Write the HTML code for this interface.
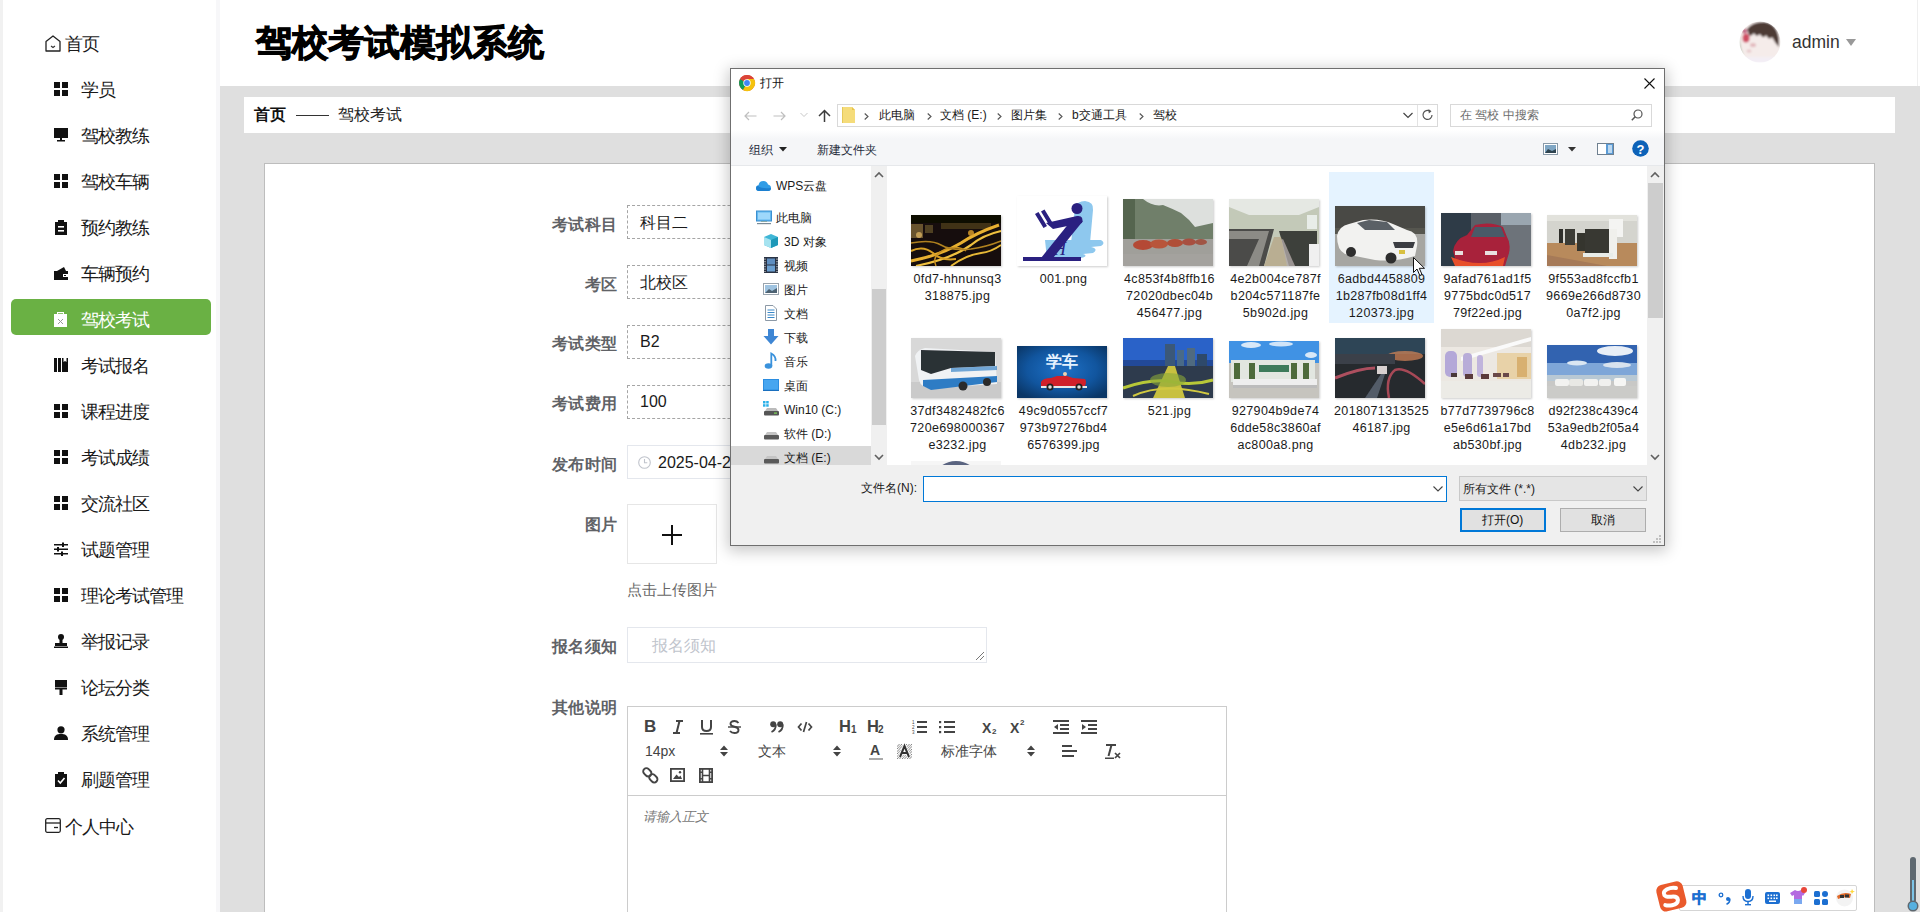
<!DOCTYPE html>
<html><head><meta charset="utf-8">
<style>
*{box-sizing:border-box;margin:0;padding:0}
html,body{width:1920px;height:912px;overflow:hidden;background:#fff;font-family:"Liberation Sans",sans-serif;color:#222}
.a{position:absolute}
.t{position:absolute;white-space:nowrap}
svg{position:absolute;overflow:visible}
</style></head><body>

<div class="a" style="left:0;top:0;width:220px;height:912px;background:#fff"></div>
<div class="a" style="left:0;top:0;width:3px;height:912px;background:#f1f1f1"></div>
<div class="a" style="left:216px;top:0;width:4px;height:912px;background:#f7f7f9"></div>
<div class="a" style="left:11px;top:299px;width:200px;height:36px;background:#6ab144;border-radius:5px"></div>
<svg style="left:45px;top:35px" width="16" height="17"><path d="M1 6.5 L8 1 L15 6.5 V16 H1Z" fill="none" stroke="#222" stroke-width="1.3" stroke-linejoin="round"/><path d="M6 11 L8 12.5 L10 11" fill="none" stroke="#333" stroke-width="1.1"/></svg>
<div class="t" style="left:65px;top:36px;font-size:17.5px;line-height:1;letter-spacing:-1px;color:#1a1a1a">首页</div>
<svg style="left:54px;top:82px" width="14" height="14"><rect x="0" y="0" width="6" height="6" fill="#111"/><rect x="8" y="0" width="6" height="6" fill="#111"/><rect x="0" y="8" width="6" height="6" fill="#111"/><rect x="8" y="8" width="6" height="6" fill="#111"/></svg>
<div class="t" style="left:81px;top:82px;font-size:17.5px;line-height:1;letter-spacing:-1px;color:#1a1a1a">学员</div>
<svg style="left:54px;top:128px" width="14" height="14"><rect x="0" y="0" width="14" height="10" fill="#111"/><rect x="6" y="10" width="2" height="2" fill="#111"/><rect x="3" y="12" width="8" height="1.5" fill="#111"/></svg>
<div class="t" style="left:81px;top:128px;font-size:17.5px;line-height:1;letter-spacing:-1px;color:#1a1a1a">驾校教练</div>
<svg style="left:54px;top:174px" width="14" height="14"><rect x="0" y="0" width="6" height="6" fill="#111"/><rect x="8" y="0" width="6" height="6" fill="#111"/><rect x="0" y="8" width="6" height="6" fill="#111"/><rect x="8" y="8" width="6" height="6" fill="#111"/></svg>
<div class="t" style="left:81px;top:174px;font-size:17.5px;line-height:1;letter-spacing:-1px;color:#1a1a1a">驾校车辆</div>
<svg style="left:55px;top:220px" width="13" height="15"><rect x="0" y="2" width="12" height="13" fill="#111"/><rect x="3" y="0" width="6" height="3" fill="#111"/><rect x="3" y="6" width="6" height="1.6" fill="#fff"/><rect x="3" y="10" width="6" height="1.6" fill="#fff"/></svg>
<div class="t" style="left:81px;top:220px;font-size:17.5px;line-height:1;letter-spacing:-1px;color:#1a1a1a">预约教练</div>
<svg style="left:54px;top:266px" width="14" height="14"><rect x="0" y="5" width="14" height="9" fill="#111"/><path d="M3 5 L10 1 L12 5Z" fill="#111"/><rect x="9" y="8" width="5" height="3" fill="#fff"/><rect x="10" y="9" width="2" height="1" fill="#111"/></svg>
<div class="t" style="left:81px;top:266px;font-size:17.5px;line-height:1;letter-spacing:-1px;color:#1a1a1a">车辆预约</div>
<svg style="left:54px;top:312px" width="14" height="15"><rect x="0" y="2" width="13" height="13" fill="#fff"/><rect x="3" y="0" width="7" height="3" fill="#fff"/><rect x="4" y="1" width="5" height="1" fill="#8fc470"/><path d="M4 7 L9 12 M9 7 L4 12" stroke="#999" stroke-width="1"/></svg>
<div class="t" style="left:81px;top:312px;font-size:17.5px;line-height:1;letter-spacing:-1px;color:#fff">驾校考试</div>
<svg style="left:54px;top:358px" width="14" height="14"><rect x="0" y="0" width="3" height="14" fill="#111"/><rect x="4" y="0" width="3" height="14" fill="#111"/><path d="M8 0 H14 V14 H8Z" fill="#111"/><path d="M9.5 0 V4 L11 3 L12.5 4 V0Z" fill="#fff"/></svg>
<div class="t" style="left:81px;top:358px;font-size:17.5px;line-height:1;letter-spacing:-1px;color:#1a1a1a">考试报名</div>
<svg style="left:54px;top:404px" width="14" height="14"><rect x="0" y="0" width="6" height="6" fill="#111"/><rect x="8" y="0" width="6" height="6" fill="#111"/><rect x="0" y="8" width="6" height="6" fill="#111"/><rect x="8" y="8" width="6" height="6" fill="#111"/></svg>
<div class="t" style="left:81px;top:404px;font-size:17.5px;line-height:1;letter-spacing:-1px;color:#1a1a1a">课程进度</div>
<svg style="left:54px;top:450px" width="14" height="14"><rect x="0" y="0" width="6" height="6" fill="#111"/><rect x="8" y="0" width="6" height="6" fill="#111"/><rect x="0" y="8" width="6" height="6" fill="#111"/><rect x="8" y="8" width="6" height="6" fill="#111"/></svg>
<div class="t" style="left:81px;top:450px;font-size:17.5px;line-height:1;letter-spacing:-1px;color:#1a1a1a">考试成绩</div>
<svg style="left:54px;top:496px" width="14" height="14"><rect x="0" y="0" width="6" height="6" fill="#111"/><rect x="8" y="0" width="6" height="6" fill="#111"/><rect x="0" y="8" width="6" height="6" fill="#111"/><rect x="8" y="8" width="6" height="6" fill="#111"/></svg>
<div class="t" style="left:81px;top:496px;font-size:17.5px;line-height:1;letter-spacing:-1px;color:#1a1a1a">交流社区</div>
<svg style="left:54px;top:542px" width="14" height="14"><rect x="0" y="2" width="14" height="1.5" fill="#111"/><rect x="0" y="6.5" width="14" height="1.5" fill="#111"/><rect x="0" y="11" width="14" height="1.5" fill="#111"/><rect x="8" y="0.5" width="2" height="4.5" fill="#111"/><rect x="3" y="5" width="2" height="4.5" fill="#111"/><rect x="7" y="9.5" width="2" height="4.5" fill="#111"/></svg>
<div class="t" style="left:81px;top:542px;font-size:17.5px;line-height:1;letter-spacing:-1px;color:#1a1a1a">试题管理</div>
<svg style="left:54px;top:588px" width="14" height="14"><rect x="0" y="0" width="6" height="6" fill="#111"/><rect x="8" y="0" width="6" height="6" fill="#111"/><rect x="0" y="8" width="6" height="6" fill="#111"/><rect x="8" y="8" width="6" height="6" fill="#111"/></svg>
<div class="t" style="left:81px;top:588px;font-size:17.5px;line-height:1;letter-spacing:-1px;color:#1a1a1a">理论考试管理</div>
<svg style="left:54px;top:634px" width="14" height="14"><circle cx="7" cy="3" r="3" fill="#111"/><rect x="5.5" y="5" width="3" height="4" fill="#111"/><rect x="1" y="9" width="12" height="3" fill="#111"/><rect x="0" y="12.5" width="14" height="1.5" fill="#111"/></svg>
<div class="t" style="left:81px;top:634px;font-size:17.5px;line-height:1;letter-spacing:-1px;color:#1a1a1a">举报记录</div>
<svg style="left:55px;top:680px" width="12" height="15"><rect x="0" y="0" width="12" height="7" fill="#111"/><rect x="0" y="7.5" width="12" height="2" fill="#111"/><rect x="4.5" y="9" width="3" height="6" fill="#111"/></svg>
<div class="t" style="left:81px;top:680px;font-size:17.5px;line-height:1;letter-spacing:-1px;color:#1a1a1a">论坛分类</div>
<svg style="left:54px;top:726px" width="14" height="14"><circle cx="7" cy="3.8" r="3.6" fill="#111"/><path d="M0 14 C0 9 3 8 7 8 C11 8 14 9 14 14Z" fill="#111"/></svg>
<div class="t" style="left:81px;top:726px;font-size:17.5px;line-height:1;letter-spacing:-1px;color:#1a1a1a">系统管理</div>
<svg style="left:55px;top:772px" width="13" height="15"><rect x="0" y="2" width="12" height="13" fill="#111"/><rect x="3" y="0" width="6" height="3" fill="#111"/><path d="M3 8.5 L5.3 11 L9.5 6" stroke="#fff" stroke-width="1.6" fill="none"/></svg>
<div class="t" style="left:81px;top:772px;font-size:17.5px;line-height:1;letter-spacing:-1px;color:#1a1a1a">刷题管理</div>
<svg style="left:45px;top:818px" width="16" height="15"><rect x="0.7" y="0.7" width="14.6" height="13.6" rx="1.5" fill="none" stroke="#222" stroke-width="1.3"/><path d="M1 5 H15" stroke="#222" stroke-width="1.3"/><path d="M9 9.5 H13" stroke="#222" stroke-width="1.3"/></svg>
<div class="t" style="left:65px;top:819px;font-size:17.5px;line-height:1;letter-spacing:-1px;color:#1a1a1a">个人中心</div>
<div class="a" style="left:220px;top:0;width:1700px;height:86px;background:#fff"></div><div class="a" style="left:1917px;top:0;width:1px;height:86px;background:#efefef"></div>
<div class="a" style="left:220px;top:86px;width:1700px;height:826px;background:#dfdfdf"></div>
<div class="a" style="left:244px;top:97px;width:1651px;height:36px;background:#fff"></div>
<div class="a" style="left:264px;top:163px;width:1611px;height:760px;background:#fff;border:1px solid #bdbdbd"></div>
<div class="t" style="left:256px;top:25px;font-size:36px;font-weight:bold;line-height:1;color:#000;-webkit-text-stroke:1px #000">驾校考试模拟系统</div>
<!-- avatar -->
<svg style="left:1739px;top:21px" width="42" height="42"><defs><clipPath id="av"><circle cx="21" cy="21" r="20.5"/></clipPath><filter id="bl"><feGaussianBlur stdDeviation="0.8"/></filter></defs>
<g clip-path="url(#av)" filter="url(#bl)"><rect width="42" height="42" fill="#f5ecea"/>
<path d="M0 8 Q0 30 8 42 H0Z" fill="#9fb09a" opacity=".8"/>
<path d="M8 8 Q14 0 26 1 Q38 3 40 18 L40 26 Q36 22 33 16 Q30 20 27 14 Q24 19 21 13 Q17 17 15 12 Q12 16 10 14Z" fill="#4e3a36"/>
<ellipse cx="7" cy="17" rx="3.5" ry="4.5" fill="#cf4d64"/><ellipse cx="5.5" cy="10" rx="2.8" ry="2.5" fill="#c26a86"/>
<ellipse cx="14" cy="24" rx="3" ry="2" fill="#e3b9bd"/><ellipse cx="10" cy="30" rx="2.5" ry="1.5" fill="#e5c5c8"/>
<rect x="0" y="36" width="42" height="6" fill="#f3eef5"/></g></svg>
<div class="t" style="left:1792px;top:33.5px;font-size:17.5px;line-height:1;color:#333">admin</div>
<svg style="left:1846px;top:39px" width="11" height="8"><path d="M0 0 H10 L5 7Z" fill="#999"/></svg>
<!-- breadcrumb -->
<div class="t" style="left:254px;top:107px;font-size:16px;line-height:1;font-weight:bold;color:#111">首页</div>
<div class="a" style="left:296px;top:115px;width:33px;height:1px;background:#333"></div>
<div class="t" style="left:338px;top:107px;font-size:16px;line-height:1;color:#222">驾校考试</div>
<!-- FORM -->
<div class="t" style="right:1302px;top:217px;font-size:16px;line-height:1;font-weight:bold;color:#606266;letter-spacing:0.6px">考试科目</div>
<div class="a" style="left:627px;top:205px;width:420px;height:34px;border:1px dashed #a5a5a5"></div>
<div class="t" style="left:640px;top:215px;font-size:16px;line-height:1;color:#1a1a1a">科目二</div>

<div class="t" style="right:1302px;top:277px;font-size:16px;line-height:1;font-weight:bold;color:#606266;letter-spacing:0.6px">考区</div>
<div class="a" style="left:627px;top:265px;width:420px;height:34px;border:1px dashed #a5a5a5"></div>
<div class="t" style="left:640px;top:275px;font-size:16px;line-height:1;color:#1a1a1a">北校区</div>

<div class="t" style="right:1302px;top:336px;font-size:16px;line-height:1;font-weight:bold;color:#606266;letter-spacing:0.6px">考试类型</div>
<div class="a" style="left:627px;top:325px;width:420px;height:34px;border:1px dashed #a5a5a5"></div>
<div class="t" style="left:640px;top:334px;font-size:16px;line-height:1;color:#1a1a1a">B2</div>

<div class="t" style="right:1302px;top:396px;font-size:16px;line-height:1;font-weight:bold;color:#606266;letter-spacing:0.6px">考试费用</div>
<div class="a" style="left:627px;top:385px;width:420px;height:34px;border:1px dashed #a5a5a5"></div>
<div class="t" style="left:640px;top:394px;font-size:16px;line-height:1;color:#1a1a1a">100</div>

<div class="t" style="right:1302px;top:457px;font-size:16px;line-height:1;font-weight:bold;color:#606266;letter-spacing:0.6px">发布时间</div>
<div class="a" style="left:627px;top:445px;width:420px;height:34px;border:1px solid #e4e7ed"></div>
<svg style="left:638px;top:456px" width="13" height="13"><circle cx="6.5" cy="6.5" r="5.8" fill="none" stroke="#c0c4cc" stroke-width="1.1"/><path d="M6.5 3 V6.8 H9.3" fill="none" stroke="#c0c4cc" stroke-width="1.1"/></svg>
<div class="t" style="left:658px;top:455px;font-size:16px;line-height:1;color:#1a1a1a">2025-04-27 10:00:00</div>

<div class="t" style="right:1302px;top:517px;font-size:16px;line-height:1;font-weight:bold;color:#606266;letter-spacing:0.6px">图片</div>
<div class="a" style="left:627px;top:504px;width:90px;height:60px;border:1px solid #e6e6e6"></div>
<div class="a" style="left:662px;top:534px;width:20px;height:2px;background:#111"></div>
<div class="a" style="left:671px;top:525px;width:2px;height:20px;background:#111"></div>
<div class="t" style="left:627px;top:583px;font-size:14.5px;line-height:1;color:#666">点击上传图片</div>

<div class="t" style="right:1302px;top:639px;font-size:16px;line-height:1;font-weight:bold;color:#606266;letter-spacing:0.6px">报名须知</div>
<div class="a" style="left:627px;top:627px;width:360px;height:36px;border:1px solid #e4e7ed"></div>
<div class="t" style="left:652px;top:638px;font-size:16px;line-height:1;color:#c0c4cc">报名须知</div>
<svg style="left:974px;top:650px" width="12" height="12"><path d="M2 10 L10 2 M6 10 L10 6" stroke="#777" stroke-width="1"/></svg>

<div class="t" style="right:1302px;top:700px;font-size:16px;line-height:1;font-weight:bold;color:#606266;letter-spacing:0.6px">其他说明</div>
<div class="a" style="left:627px;top:706px;width:600px;height:220px;border:1px solid #ccc;background:#fff"></div>
<div class="a" style="left:628px;top:795px;width:598px;height:1px;background:#ccc"></div>
<div class="t" style="left:644px;top:718px;font-size:17px;line-height:1;color:#444;font-weight:bold">B</div>
<svg style="left:672px;top:720px" width="12" height="14"><path d="M4 1 H11 M1 13 H8 M7.5 1 L4.5 13" stroke="#444" stroke-width="2" fill="none"/></svg>
<svg style="left:700px;top:719px" width="13" height="16"><path d="M2 1 V8 Q2 12 6.5 12 Q11 12 11 8 V1" stroke="#444" stroke-width="2" fill="none"/><rect x="0" y="14" width="13" height="1.6" fill="#444"/></svg>
<svg style="left:728px;top:720px" width="13" height="14"><path d="M10.5 3 Q9 1 6.5 1 Q2.5 1 2.5 3.8 Q2.5 6 6.5 6.8 Q10.5 7.6 10.5 10 Q10.5 13 6.5 13 Q3.5 13 2 11" stroke="#444" stroke-width="1.9" fill="none"/><rect x="0" y="6.3" width="13" height="1.4" fill="#444"/></svg>
<svg style="left:770px;top:721px" width="14" height="12"><circle cx="3.2" cy="3.2" r="3" fill="#444"/><path d="M5.8 3.5 Q6 9 1.5 11" stroke="#444" stroke-width="1.8" fill="none"/><circle cx="10.2" cy="3.2" r="3" fill="#444"/><path d="M12.8 3.5 Q13 9 8.5 11" stroke="#444" stroke-width="1.8" fill="none"/></svg>
<svg style="left:797px;top:721px" width="16" height="12"><path d="M4.5 2.5 L1.5 6 L4.5 9.5 M11.5 2.5 L14.5 6 L11.5 9.5 M9.5 1 L6.5 11" stroke="#444" stroke-width="1.7" fill="none"/></svg>
<div class="t" style="left:839px;top:718px;font-size:16.5px;line-height:1;color:#444;font-weight:bold">H</div><div class="t" style="left:851px;top:725px;font-size:10px;line-height:1;color:#444;font-weight:bold">1</div>
<div class="t" style="left:867px;top:718px;font-size:16.5px;line-height:1;color:#444;font-weight:bold">H</div><div class="t" style="left:878px;top:725px;font-size:10px;line-height:1;color:#444;font-weight:bold">2</div>
<svg style="left:912px;top:720px" width="15" height="14"><path d="M5 2 H15 M5 7 H15 M5 12 H15" stroke="#444" stroke-width="1.8"/><text x="0" y="4" font-size="4.5" fill="#444" font-family="Liberation Sans">1</text><text x="0" y="9" font-size="4.5" fill="#444" font-family="Liberation Sans">2</text><text x="0" y="14" font-size="4.5" fill="#444" font-family="Liberation Sans">3</text></svg>
<svg style="left:939px;top:720px" width="16" height="14"><path d="M5 2 H16 M5 7 H16 M5 12 H16" stroke="#444" stroke-width="1.8"/><rect x="0" y="1" width="2.2" height="2.2" fill="#444"/><rect x="0" y="6" width="2.2" height="2.2" fill="#444"/><rect x="0" y="11" width="2.2" height="2.2" fill="#444"/></svg>
<div class="t" style="left:982px;top:721px;font-size:14px;line-height:1;color:#444;font-weight:bold">X</div><div class="t" style="left:992px;top:728px;font-size:8px;line-height:1;color:#444;font-weight:bold">2</div>
<div class="t" style="left:1010px;top:721px;font-size:14px;line-height:1;color:#444;font-weight:bold">X</div><div class="t" style="left:1020px;top:719px;font-size:8px;line-height:1;color:#444;font-weight:bold">2</div>
<svg style="left:1053px;top:720px" width="16" height="14"><path d="M0 1 H16 M0 13 H16 M7 5 H16 M7 9 H16" stroke="#444" stroke-width="1.8"/><path d="M5 4 L1 7 L5 10Z" fill="#444"/></svg>
<svg style="left:1081px;top:720px" width="16" height="14"><path d="M0 1 H16 M0 13 H16 M7 5 H16 M7 9 H16" stroke="#444" stroke-width="1.8"/><path d="M1 4 L5 7 L1 10Z" fill="#444"/></svg>
<div class="t" style="left:645px;top:744px;font-size:14px;line-height:1;color:#444;color:#444">14px</div>
<svg style="left:720px;top:745px" width="8" height="12"><path d="M0 5 L4 0.5 L8 5Z M0 7 L4 11.5 L8 7Z" fill="#444"/></svg>
<div class="t" style="left:758px;top:744px;font-size:14px;line-height:1;color:#444;">文本</div>
<svg style="left:833px;top:745px" width="8" height="12"><path d="M0 5 L4 0.5 L8 5Z M0 7 L4 11.5 L8 7Z" fill="#444"/></svg>
<div class="t" style="left:870px;top:743px;font-size:14px;line-height:1;color:#444;font-weight:bold">A</div>
<div class="a" style="left:869px;top:758px;width:14px;height:2px;background:#aaa"></div>
<svg style="left:897px;top:744px" width="15" height="15"><defs><pattern id="h" width="2.5" height="2.5" patternUnits="userSpaceOnUse"><path d="M0 2.5 L2.5 0" stroke="#666" stroke-width="0.8"/></pattern></defs><rect x="0" y="0" width="15" height="15" fill="url(#h)"/><path d="M3 13 L7.5 2 L12 13 M4.8 9 H10.2" stroke="#fff" stroke-width="3.6" fill="none"/><path d="M3 13 L7.5 2 L12 13 M4.8 9 H10.2" stroke="#333" stroke-width="2" fill="none"/></svg>
<div class="t" style="left:941px;top:744px;font-size:14px;line-height:1;color:#444;">标准字体</div>
<svg style="left:1027px;top:745px" width="8" height="12"><path d="M0 5 L4 0.5 L8 5Z M0 7 L4 11.5 L8 7Z" fill="#444"/></svg>
<svg style="left:1062px;top:745px" width="15" height="12"><path d="M0 1 H10 M0 6 H15 M0 11 H12" stroke="#444" stroke-width="1.8"/></svg>
<svg style="left:1105px;top:743px" width="16" height="17"><path d="M1 2 H11 M6.5 2 L3.5 13" stroke="#444" stroke-width="2" fill="none"/><rect x="0" y="14.5" width="9" height="1.5" fill="#444"/><path d="M10 10 L15 15 M15 10 L10 15" stroke="#444" stroke-width="1.7"/></svg>
<svg style="left:643px;top:768px" width="15" height="15"><g transform="rotate(-45 7.5 7.5)"><rect x="4.3" y="-1.5" width="6.4" height="9" rx="3.2" fill="none" stroke="#444" stroke-width="1.9"/><rect x="4.3" y="7" width="6.4" height="9" rx="3.2" fill="none" stroke="#444" stroke-width="1.9"/></g></svg>
<svg style="left:670px;top:768px" width="15" height="14"><rect x="0.9" y="0.9" width="13.2" height="12.2" fill="none" stroke="#444" stroke-width="1.8"/><path d="M3 11 L6.5 6.5 L9 9 L10.5 7.5 L12 11Z" fill="#444"/><circle cx="10" cy="4.2" r="1.2" fill="#444"/></svg>
<svg style="left:699px;top:768px" width="14" height="15"><rect x="0.9" y="0.9" width="12.2" height="13.2" fill="none" stroke="#444" stroke-width="1.8"/><path d="M3.5 1 V14 M10.5 1 V14 M3.5 7.5 H10.5 M0 4.3 H3.5 M0 10.7 H3.5 M10.5 4.3 H14 M10.5 10.7 H14" stroke="#444" stroke-width="1.6"/></svg>
<div class="t" style="left:643px;top:810px;font-size:13px;line-height:1;color:#777;font-style:italic">请输入正文</div>

<div class="a" style="left:730px;top:68px;width:935px;height:478px;background:#fff;border:1px solid #6f6f6f;box-shadow:0 3px 14px 2px rgba(0,0,0,0.22)"></div>
<svg style="left:739px;top:75px" width="16" height="16"><circle cx="8" cy="8" r="8" fill="#db4437"/><path d="M8 8 L1.07 4 A8 8 0 0 0 4 14.93Z" fill="#0f9d58"/><path d="M8 8 L4 14.93 A8 8 0 0 0 14.93 4 L8 4Z" fill="#f4c20d"/><path d="M8 8 L1.07 4 A8 8 0 0 1 14.93 4 L8 4Z" fill="#db4437"/><circle cx="8" cy="8" r="3.7" fill="#fff"/><circle cx="8" cy="8" r="2.9" fill="#4285f4"/></svg>
<div class="t" style="left:760px;top:77px;font-size:12px;line-height:1;color:#111;">打开</div>
<svg style="left:1644px;top:78px" width="11" height="11"><path d="M0.5 0.5 L10.5 10.5 M10.5 0.5 L0.5 10.5" stroke="#111" stroke-width="1.1"/></svg>
<svg style="left:744px;top:111px" width="13" height="10"><path d="M12.5 5 H1 M5 1 L1 5 L5 9" stroke="#bfbfbf" stroke-width="1.2" fill="none"/></svg>
<svg style="left:773px;top:111px" width="13" height="10"><path d="M0.5 5 H12 M8 1 L12 5 L8 9" stroke="#bfbfbf" stroke-width="1.2" fill="none"/></svg>
<svg style="left:800px;top:112px" width="8" height="6"><path d="M0.5 1 L4 4.5 L7.5 1" stroke="#c8c8c8" stroke-width="1" fill="none"/></svg>
<svg style="left:818px;top:109px" width="13" height="13"><path d="M6.5 13 V1.5 M1 7 L6.5 1.5 L12 7" stroke="#3c3c3c" stroke-width="1.5" fill="none"/></svg>
<div class="a" style="left:837px;top:104px;width:601px;height:23px;border:1px solid #d9d9d9;background:#fff"></div>
<div class="a" style="left:1417px;top:105px;width:1px;height:21px;background:#e3e3e3"></div>
<svg style="left:842px;top:107px" width="14" height="16"><path d="M0 0 H10 L13 3 V16 H0Z" fill="#f5dc7a"/><path d="M10 0 V3 H13" fill="#e8c44a"/><rect x="0" y="0" width="1" height="16" fill="#e5c95a"/></svg>
<svg style="left:864px;top:113px" width="5" height="7"><path d="M0.7 0.5 L4 3.5 L0.7 6.5" stroke="#555" stroke-width="1.1" fill="none"/></svg>
<div class="t" style="left:879px;top:109px;font-size:12px;line-height:1;color:#1a1a1a;">此电脑</div>
<svg style="left:927px;top:113px" width="5" height="7"><path d="M0.7 0.5 L4 3.5 L0.7 6.5" stroke="#555" stroke-width="1.1" fill="none"/></svg>
<div class="t" style="left:940px;top:109px;font-size:12px;line-height:1;color:#1a1a1a;">文档 (E:)</div>
<svg style="left:997px;top:113px" width="5" height="7"><path d="M0.7 0.5 L4 3.5 L0.7 6.5" stroke="#555" stroke-width="1.1" fill="none"/></svg>
<div class="t" style="left:1011px;top:109px;font-size:12px;line-height:1;color:#1a1a1a;">图片集</div>
<svg style="left:1058px;top:113px" width="5" height="7"><path d="M0.7 0.5 L4 3.5 L0.7 6.5" stroke="#555" stroke-width="1.1" fill="none"/></svg>
<div class="t" style="left:1072px;top:109px;font-size:12px;line-height:1;color:#1a1a1a;">b交通工具</div>
<svg style="left:1139px;top:113px" width="5" height="7"><path d="M0.7 0.5 L4 3.5 L0.7 6.5" stroke="#555" stroke-width="1.1" fill="none"/></svg>
<div class="t" style="left:1153px;top:109px;font-size:12px;line-height:1;color:#1a1a1a;">驾校</div>
<svg style="left:1403px;top:112px" width="10" height="7"><path d="M0.5 1 L5 5.5 L9.5 1" stroke="#444" stroke-width="1.2" fill="none"/></svg>
<svg style="left:1422px;top:109px" width="12" height="12"><path d="M10 6 A4.5 4.5 0 1 1 8 2.2" stroke="#555" stroke-width="1.2" fill="none"/><path d="M6.5 0 L9.5 2.2 L6.8 4.5Z" fill="#555"/></svg>
<div class="a" style="left:1450px;top:104px;width:202px;height:23px;border:1px solid #d9d9d9;background:#fff"></div>
<div class="t" style="left:1460px;top:109px;font-size:12px;line-height:1;color:#6d6d6d;">在 驾校 中搜索</div>
<svg style="left:1631px;top:109px" width="12" height="12"><circle cx="7" cy="5" r="4" stroke="#555" stroke-width="1.2" fill="none"/><path d="M4.2 7.8 L0.8 11.2" stroke="#555" stroke-width="1.5"/></svg>
<div class="a" style="left:731px;top:130px;width:933px;height:36px;background:linear-gradient(#fff 0,#f5f6f8 9px,#f5f6f8 100%);border-bottom:1px solid #e6e8eb"></div>
<div class="t" style="left:749px;top:144px;font-size:12px;line-height:1;color:#1e2b3a;">组织</div>
<svg style="left:779px;top:147px" width="8" height="5"><path d="M0 0 H8 L4 4.5Z" fill="#222"/></svg>
<div class="t" style="left:817px;top:144px;font-size:12px;line-height:1;color:#1e2b3a;">新建文件夹</div>
<svg style="left:1543px;top:143px" width="15" height="12"><rect x="0.5" y="0.5" width="14" height="11" fill="#fff" stroke="#8a9aa8"/><rect x="2" y="2" width="11" height="8" fill="#7fa6c4"/><path d="M2 10 L5 6 L9 8 L13 6 V10Z" fill="#2e4450"/></svg>
<svg style="left:1568px;top:147px" width="8" height="5"><path d="M0 0 H8 L4 4.5Z" fill="#333"/></svg>
<svg style="left:1597px;top:143px" width="17" height="12"><rect x="0.5" y="0.5" width="16" height="11" fill="#fff" stroke="#6f8090"/><rect x="9" y="1" width="7" height="10" fill="#5b9bd5"/><rect x="11" y="2" width="4" height="8" fill="#bcd8f0"/></svg>
<svg style="left:1632px;top:140px" width="17" height="17"><circle cx="8.5" cy="8.5" r="8.3" fill="#0d62b8"/><text x="8.5" y="13.5" text-anchor="middle" font-size="13" font-weight="bold" fill="#fff" font-family="Liberation Sans">?</text></svg>
<div class="a" style="left:871px;top:166px;width:16px;height:299px;background:#f0f0f0"></div>
<div class="a" style="left:872px;top:289px;width:14px;height:136px;background:#cdcdcd"></div>
<svg style="left:874px;top:172px" width="10" height="6"><path d="M1 5 L5 1 L9 5" stroke="#606060" stroke-width="1.6" fill="none"/></svg>
<svg style="left:874px;top:454px" width="10" height="6"><path d="M1 1 L5 5 L9 1" stroke="#606060" stroke-width="1.6" fill="none"/></svg>
<div class="a" style="left:731px;top:446px;width:140px;height:19px;background:#d9d9d9"></div>
<svg style="left:756px;top:177px" width="15" height="16"><path d="M3 14 Q0 14 0 11 Q0 8.5 2.5 8.3 Q3 4 7.5 4 Q11 4 12 7.5 Q15 8 15 11 Q15 14 12 14Z" fill="#2f9ce6"/><path d="M3 14 Q0 14 0 11 Q0 9 2 8.5 Q4 12 15 11 Q15 14 12 14Z" fill="#1b7fd0"/></svg>
<div class="t" style="left:776px;top:180px;font-size:12px;line-height:1;color:#1a1a1a;">WPS云盘</div>
<svg style="left:756px;top:209px" width="16" height="16"><rect x="0.5" y="2" width="15" height="10" fill="#62b8ef" stroke="#3b8fd0" stroke-width="1"/><rect x="2" y="3.5" width="12" height="7" fill="#9ed8fb"/><rect x="5" y="12" width="6" height="1" fill="#8aa"/><rect x="1" y="14" width="14" height="1.2" fill="#7a8a96"/></svg>
<div class="t" style="left:776px;top:212px;font-size:12px;line-height:1;color:#1a1a1a;">此电脑</div>
<svg style="left:763px;top:233px" width="16" height="16"><path d="M8 1 L15 4 V12 L8 15 L1 12 V4Z" fill="#3fb6d6"/><path d="M1 4 L8 7 V15 L1 12Z" fill="#a6e3f0"/><path d="M8 7 L15 4 V12 L8 15Z" fill="#1d98b8"/></svg>
<div class="t" style="left:784px;top:236px;font-size:12px;line-height:1;color:#1a1a1a;">3D 对象</div>
<svg style="left:763px;top:257px" width="16" height="16"><rect x="1" y="0" width="14" height="16" fill="#2a3344"/><rect x="4" y="1.5" width="8" height="6" fill="#5f8ec0"/><rect x="4" y="8.5" width="8" height="6" fill="#6b9fd0"/><path d="M2 1.5 V15 M14 1.5 V15" stroke="#c9c9c9" stroke-width="1.2" stroke-dasharray="1.2 1.3"/></svg>
<div class="t" style="left:784px;top:260px;font-size:12px;line-height:1;color:#1a1a1a;">视频</div>
<svg style="left:763px;top:281px" width="16" height="16"><rect x="0.5" y="2.5" width="15" height="11" fill="#fff" stroke="#9aa4ad"/><rect x="2" y="4" width="12" height="8" fill="#9fc3e0"/><path d="M2 12 L6 8 L9 10 L14 7 V12Z" fill="#4d6272"/></svg>
<div class="t" style="left:784px;top:284px;font-size:12px;line-height:1;color:#1a1a1a;">图片</div>
<svg style="left:763px;top:305px" width="16" height="16"><path d="M2.5 0.5 H10 L13.5 4 V15.5 H2.5Z" fill="#fff" stroke="#8c99a6"/><path d="M4.5 5 H11.5 M4.5 7.5 H11.5 M4.5 10 H11.5 M4.5 12.5 H11.5" stroke="#3a88c8" stroke-width="1"/></svg>
<div class="t" style="left:784px;top:308px;font-size:12px;line-height:1;color:#1a1a1a;">文档</div>
<svg style="left:763px;top:329px" width="16" height="16"><path d="M5 0 H11 V7 H15.5 L8 15.5 L0.5 7 H5Z" fill="#3e86d4"/></svg>
<div class="t" style="left:784px;top:332px;font-size:12px;line-height:1;color:#1a1a1a;">下载</div>
<svg style="left:763px;top:353px" width="16" height="16"><ellipse cx="5.5" cy="13" rx="3.8" ry="2.8" fill="#3a92dc"/><path d="M8.3 13 V0.5 Q13 3 12.5 8" stroke="#3a92dc" stroke-width="1.8" fill="none"/></svg>
<div class="t" style="left:784px;top:356px;font-size:12px;line-height:1;color:#1a1a1a;">音乐</div>
<svg style="left:763px;top:377px" width="16" height="16"><rect x="0" y="2" width="16" height="12" fill="#2b8de0"/><rect x="1" y="3" width="14" height="9.5" fill="#47a6f0"/><rect x="0" y="13" width="16" height="1" fill="#1a6fbe"/></svg>
<div class="t" style="left:784px;top:380px;font-size:12px;line-height:1;color:#1a1a1a;">桌面</div>
<svg style="left:763px;top:401px" width="16" height="16"><rect x="0" y="0" width="2.5" height="2.5" fill="#2ab0e8"/><rect x="3.2" y="0" width="2.5" height="2.5" fill="#2ab0e8"/><rect x="0" y="3.2" width="2.5" height="2.5" fill="#2ab0e8"/><rect x="3.2" y="3.2" width="2.5" height="2.5" fill="#2ab0e8"/><path d="M2 10 L4 7 H13 L15 10Z" fill="#bbb"/><rect x="1" y="10" width="15" height="4.5" rx="1" fill="#555"/><rect x="11" y="11.5" width="3" height="1.2" fill="#7ed957"/></svg>
<div class="t" style="left:784px;top:404px;font-size:12px;line-height:1;color:#1a1a1a;">Win10 (C:)</div>
<svg style="left:763px;top:425px" width="16" height="16"><path d="M2 10 L4 7 H13 L15 10Z" fill="#c4c4c4"/><rect x="1" y="10" width="15" height="4.5" rx="1" fill="#5a5a5a"/></svg>
<div class="t" style="left:784px;top:428px;font-size:12px;line-height:1;color:#1a1a1a;">软件 (D:)</div>
<svg style="left:763px;top:449px" width="16" height="16"><path d="M2 10 L4 7 H13 L15 10Z" fill="#c4c4c4"/><rect x="1" y="10" width="15" height="4.5" rx="1" fill="#5a5a5a"/></svg>
<div class="t" style="left:784px;top:452px;font-size:12px;line-height:1;color:#1a1a1a;">文档 (E:)</div>
<div class="a" style="left:1647px;top:166px;width:17px;height:299px;background:#f0f0f0"></div>
<div class="a" style="left:1648px;top:183px;width:15px;height:135px;background:#cdcdcd"></div>
<svg style="left:1650px;top:172px" width="10" height="6"><path d="M1 5 L5 1 L9 5" stroke="#606060" stroke-width="1.6" fill="none"/></svg>
<svg style="left:1650px;top:454px" width="10" height="6"><path d="M1 1 L5 5 L9 1" stroke="#606060" stroke-width="1.6" fill="none"/></svg>
<div class="a" style="left:1329px;top:172px;width:105px;height:151px;background:#e5f3ff"></div>
<div class="a" style="left:911px;top:215px;width:90px;height:51px;background:#fff;overflow:hidden;box-shadow:1px 1px 2px rgba(0,0,0,0.2);"><svg width="90" height="51" style="left:0;top:0"><defs><filter id="tb1" x="-5%" y="-5%" width="110%" height="110%"><feGaussianBlur stdDeviation="0.6"/></filter></defs><g filter="url(#tb1)"><rect width="90" height="51" fill="#150f07"/>
<rect x="0" y="0" width="90" height="8" fill="#0c0904"/>
<rect x="0" y="9" width="12" height="14" fill="#8a7040" opacity=".7"/><rect x="14" y="10" width="8" height="8" fill="#6a5530" opacity=".7"/>
<rect x="30" y="8" width="50" height="6" fill="#4a3818" opacity=".8"/>
<path d="M0 46 Q30 40 50 28 Q65 18 88 10" stroke="#e8b030" stroke-width="3" fill="none"/>
<path d="M5 51 Q40 44 60 30 Q72 20 90 16" stroke="#f0c040" stroke-width="2.2" fill="none"/>
<path d="M0 36 Q12 30 22 38 Q30 46 45 44" stroke="#d8a028" stroke-width="2" fill="none"/>
<path d="M25 51 Q20 40 35 34 Q48 30 55 36" stroke="#c89020" stroke-width="1.5" fill="none"/>
<circle cx="60" cy="18" r="3" fill="#e0a030" opacity=".8"/><path d="M0 28 Q20 24 30 30 Q40 36 60 34 Q75 32 90 26" stroke="#b08020" stroke-width="1.5" fill="none"/><path d="M40 51 Q55 40 70 38 Q80 37 90 30" stroke="#e8b838" stroke-width="2" fill="none"/><circle cx="8" cy="20" r="3" fill="#d8b060" opacity=".8"/></g></svg></div>
<div class="a" style="left:1017px;top:196px;width:90px;height:70px;background:#fff;overflow:hidden;box-shadow:1px 1px 2px rgba(0,0,0,0.2);"><svg width="90" height="70" style="left:0;top:0">
<path d="M58 12 Q60 5 68 5 Q77 6 76 14 L73 47 L54 47Z" fill="#8ec8ee"/>
<path d="M28 44 L84 44 Q89 47 84 50 L74 51 Q82 53 76 57 L66 58 Q72 60 64 62 L30 63Z" fill="#8ec8ee"/>
<circle cx="60" cy="12.5" r="5.5" fill="#2a2080"/>
<path d="M18 18 L21.5 16 L30 30 L26.5 32Z M24 15.5 L27.5 13.5 L36 27.5 L32.5 29.5Z" fill="#2a2080"/>
<path d="M29 27 L60 20 Q67 19 65 27 L36 33Z" fill="#2a2080"/>
<path d="M57 21 L66 25 L36 62 L24 62Z" fill="#2a2080"/>
<rect x="6" y="61" width="58" height="4" fill="#2a2080"/>
<text x="36" y="59" font-size="18" font-style="italic" fill="#2a2080" font-family="Liberation Serif">H</text></svg></div>
<div class="a" style="left:1123px;top:199px;width:90px;height:67px;background:#fff;overflow:hidden;box-shadow:1px 1px 2px rgba(0,0,0,0.2);"><svg width="90" height="67" style="left:0;top:0"><defs><filter id="tb3" x="-5%" y="-5%" width="110%" height="110%"><feGaussianBlur stdDeviation="0.7"/></filter></defs><g filter="url(#tb3)"><rect width="90" height="67" fill="#dde0dd"/>
<path d="M0 0 H20 Q30 8 40 6 Q50 10 58 14 Q66 20 72 28 L90 24 V45 H0Z" fill="#6f7f6a"/>
<path d="M0 0 H12 V45 H0Z" fill="#55654f"/>
<rect x="0" y="40" width="90" height="27" fill="#a09f9a"/>
<ellipse cx="20" cy="46" rx="10" ry="5" fill="#b44a35"/><ellipse cx="36" cy="45" rx="9" ry="4.5" fill="#b8553a"/><ellipse cx="52" cy="44" rx="8" ry="4" fill="#b05038"/><ellipse cx="66" cy="43" rx="7" ry="3.5" fill="#a85040"/><ellipse cx="78" cy="43" rx="6" ry="3" fill="#a05545"/>
<rect x="0" y="55" width="90" height="12" fill="#a5a49f" opacity=".7"/></g></svg></div>
<div class="a" style="left:1229px;top:199px;width:90px;height:67px;background:#fff;overflow:hidden;box-shadow:1px 1px 2px rgba(0,0,0,0.2);"><svg width="90" height="67" style="left:0;top:0"><defs><filter id="tb4" x="-5%" y="-5%" width="110%" height="110%"><feGaussianBlur stdDeviation="0.6"/></filter></defs><g filter="url(#tb4)"><rect width="90" height="67" fill="#c3c9b8"/>
<path d="M0 0 H90 V8 L70 16 H20 L0 8Z" fill="#e5e8e3"/>
<rect x="78" y="16" width="10" height="14" fill="#e8ede8"/>
<path d="M0 30 H45 L35 67 H0Z" fill="#4b4b48"/>
<path d="M0 32 L40 32 L30 67 H18 L30 40 H0Z" fill="#b8b5b0" opacity=".6"/>
<path d="M50 32 H88 V67 H60Z" fill="#3e403a"/>
<path d="M54 40 L66 67 H58 L50 42Z" fill="#b0a8a8" opacity=".8"/>
<path d="M35 67 L45 38 L52 38 L58 67Z" fill="#b9ae92"/>
<rect x="80" y="45" width="10" height="22" fill="#f0f0f0"/></g></svg></div>
<div class="a" style="left:1335px;top:206px;width:90px;height:60px;background:#fff;overflow:hidden;box-shadow:1px 1px 2px rgba(0,0,0,0.2);"><svg width="90" height="60" style="left:0;top:0"><defs><filter id="tb5" x="-5%" y="-5%" width="110%" height="110%"><feGaussianBlur stdDeviation="0.5"/></filter></defs><g filter="url(#tb5)"><rect width="90" height="60" fill="#565650"/>
<rect x="0" y="0" width="90" height="22" fill="#4a4844"/>
<rect x="0" y="28" width="90" height="32" fill="#a6a6a2"/>
<path d="M2 30 Q4 20 14 18 L28 14 Q45 12 58 18 L72 24 Q84 26 82 40 L80 50 Q60 56 40 54 L10 48 Q2 44 2 30Z" fill="#f2f2f0"/>
<path d="M22 17 L34 14 L52 16 L60 24 L30 24Z" fill="#5a6066"/>
<path d="M58 36 H80 L78 42 H60Z" fill="#3a3e42"/>
<circle cx="16" cy="46" r="5" fill="#2e2e2e"/><circle cx="56" cy="52" r="5.5" fill="#2e2e2e"/>
<rect x="64" y="44" width="6" height="4" fill="#d8c040"/></g></svg></div>
<div class="a" style="left:1441px;top:213px;width:90px;height:53px;background:#fff;overflow:hidden;box-shadow:1px 1px 2px rgba(0,0,0,0.2);"><svg width="90" height="53" style="left:0;top:0"><defs><filter id="tb6" x="-5%" y="-5%" width="110%" height="110%"><feGaussianBlur stdDeviation="0.6"/></filter></defs><g filter="url(#tb6)"><rect width="90" height="53" fill="#6d737a"/>
<rect x="0" y="0" width="30" height="53" fill="#2e3a46"/>
<rect x="30" y="0" width="30" height="20" fill="#5a6068"/>
<rect x="60" y="0" width="30" height="12" fill="#9aa6b0"/>
<path d="M12 38 Q14 26 26 22 L34 12 Q50 8 62 14 L66 24 Q70 30 68 40 L64 53 H16Z" fill="#a8203a"/>
<path d="M34 14 L60 14 L64 24 L30 24Z" fill="#4a5a68"/>
<path d="M10 44 Q40 56 64 44 L62 53 H14Z" fill="#e8502a"/>
<rect x="14" y="38" width="8" height="4" fill="#e8e0e0"/><rect x="44" y="38" width="12" height="4" fill="#e8e0e0"/></g></svg></div>
<div class="a" style="left:1547px;top:215px;width:90px;height:51px;background:#fff;overflow:hidden;box-shadow:1px 1px 2px rgba(0,0,0,0.2);"><svg width="90" height="51" style="left:0;top:0"><defs><filter id="tb7" x="-5%" y="-5%" width="110%" height="110%"><feGaussianBlur stdDeviation="0.6"/></filter></defs><g filter="url(#tb7)"><rect width="90" height="51" fill="#d4d4ce"/>
<rect x="0" y="0" width="90" height="6" fill="#e2e2dc"/>
<rect x="62" y="4" width="14" height="18" fill="#f4f4f2"/>
<rect x="0" y="28" width="90" height="23" fill="#b88a5c"/>
<path d="M0 40 L60 51 H0Z" fill="#a67a58"/>
<rect x="12" y="14" width="4" height="14" fill="#2e2e2a"/><rect x="18" y="14" width="10" height="16" fill="#3a3a34"/>
<rect x="30" y="18" width="8" height="18" fill="#36362f"/>
<rect x="38" y="14" width="24" height="26" fill="#383830"/>
<rect x="62" y="14" width="8" height="30" fill="#f0f0ec"/>
<rect x="36" y="38" width="30" height="4" fill="#e8ece8"/></g></svg></div>
<div class="a" style="left:911px;top:338px;width:90px;height:60px;background:#fff;overflow:hidden;box-shadow:1px 1px 2px rgba(0,0,0,0.2);"><svg width="90" height="60" style="left:0;top:0"><defs><filter id="tb8" x="-5%" y="-5%" width="110%" height="110%"><feGaussianBlur stdDeviation="0.5"/></filter></defs><g filter="url(#tb8)"><rect width="90" height="60" fill="#d8d8d8"/>
<rect x="0" y="44" width="90" height="16" fill="#cacaca"/>
<path d="M4 18 Q6 12 14 10 L84 14 L86 46 L20 50 Q10 50 8 42Z" fill="#f0f2f4"/>
<path d="M10 12 L84 14 L84 28 L40 30 L20 36 L10 32Z" fill="#2c3136"/>
<path d="M12 42 L86 38 L86 44 L20 52 L12 48Z" fill="#2f7cc4"/>
<path d="M40 30 L86 28 L86 32 L40 34Z" fill="#3b86c8" opacity=".7"/>
<circle cx="52" cy="48" r="4.5" fill="#2a2a2a"/><circle cx="76" cy="44" r="4" fill="#2a2a2a"/></g></svg></div>
<div class="a" style="left:1017px;top:346px;width:90px;height:52px;background:#fff;overflow:hidden;box-shadow:1px 1px 2px rgba(0,0,0,0.2);"><svg width="90" height="52" style="left:0;top:0"><defs><radialGradient id="xc" cx="50%" cy="45%" r="65%"><stop offset="0" stop-color="#1f72c8"/><stop offset=".6" stop-color="#11559e"/><stop offset="1" stop-color="#0a3666"/></radialGradient></defs>
<rect width="90" height="52" fill="url(#xc)"/>
<text x="45" y="21" text-anchor="middle" font-size="16" font-weight="bold" fill="#e6f2ff" font-family="Liberation Sans">学车</text>
<path d="M24 36 Q26 32 34 32 L40 30 L50 30 L56 32 L68 33 Q70 36 68 40 H24Z" fill="#d0202a"/>
<rect x="24" y="40" width="46" height="2" fill="#e8e8e8"/>
<circle cx="33" cy="41" r="3.5" fill="#222"/><circle cx="33" cy="41" r="1.8" fill="#ddd"/><circle cx="62" cy="41" r="3.5" fill="#222"/><circle cx="62" cy="41" r="1.8" fill="#ddd"/>
<circle cx="48" cy="28" r="2" fill="#f0d0b0"/></svg></div>
<div class="a" style="left:1123px;top:338px;width:90px;height:60px;background:#fff;overflow:hidden;box-shadow:1px 1px 2px rgba(0,0,0,0.2);"><svg width="90" height="60" style="left:0;top:0"><defs><filter id="tb10" x="-5%" y="-5%" width="110%" height="110%"><feGaussianBlur stdDeviation="0.6"/></filter></defs><g filter="url(#tb10)"><rect width="90" height="60" fill="#234a98"/>
<rect x="0" y="0" width="90" height="22" fill="#2a62c8"/>
<rect x="42" y="6" width="10" height="24" fill="#3a5878"/><rect x="54" y="12" width="7" height="18" fill="#4a6a88"/><rect x="64" y="10" width="8" height="20" fill="#506a80"/><rect x="74" y="16" width="10" height="16" fill="#2e4a6a"/>
<rect x="0" y="28" width="90" height="32" fill="#2d3a4e"/>
<path d="M30 60 L45 28 L52 28 L62 60Z" fill="#c8c040"/>
<path d="M0 50 Q30 40 50 44 Q70 48 90 42" stroke="#b8c838" stroke-width="3" fill="none"/>
<path d="M10 58 Q40 44 86 56" stroke="#d0c840" stroke-width="2" fill="none"/>
<ellipse cx="45" cy="42" rx="18" ry="7" fill="#8aa838" opacity=".6"/></g></svg></div>
<div class="a" style="left:1229px;top:341px;width:90px;height:57px;background:#fff;overflow:hidden;box-shadow:1px 1px 2px rgba(0,0,0,0.2);"><svg width="90" height="57" style="left:0;top:0"><defs><filter id="tb11" x="-5%" y="-5%" width="110%" height="110%"><feGaussianBlur stdDeviation="0.6"/></filter></defs><g filter="url(#tb11)"><rect width="90" height="57" fill="#c6c4be"/>
<rect x="0" y="0" width="90" height="22" fill="#3f92e4"/>
<ellipse cx="22" cy="4" rx="10" ry="3" fill="#d8e8f8"/><ellipse cx="52" cy="3" rx="12" ry="2.5" fill="#d0e4f8"/><ellipse cx="82" cy="14" rx="6" ry="3" fill="#d8e8f8"/>
<rect x="2" y="19" width="84" height="22" fill="#e2e6e0"/>
<rect x="30" y="24" width="30" height="7" fill="#3d7a5a"/>
<rect x="5" y="22" width="6" height="16" fill="#4d6a3a"/><rect x="20" y="22" width="6" height="16" fill="#4d6a3a"/><rect x="62" y="22" width="6" height="16" fill="#4d6a3a"/><rect x="74" y="22" width="6" height="16" fill="#4d6a3a"/>
<rect x="4" y="38" width="84" height="9" fill="#eeeeee"/>
<rect x="4" y="44" width="84" height="3" fill="#8a8a8a" opacity=".5"/></g></svg></div>
<div class="a" style="left:1335px;top:338px;width:90px;height:60px;background:#fff;overflow:hidden;box-shadow:1px 1px 2px rgba(0,0,0,0.2);"><svg width="90" height="60" style="left:0;top:0"><defs><filter id="tb12" x="-5%" y="-5%" width="110%" height="110%"><feGaussianBlur stdDeviation="0.7"/></filter></defs><g filter="url(#tb12)"><rect width="90" height="60" fill="#25292f"/>
<rect x="0" y="0" width="90" height="16" fill="#2e4456"/>
<ellipse cx="70" cy="18" rx="18" ry="5" fill="#d88858" opacity=".7"/>
<rect x="0" y="16" width="60" height="10" fill="#3a4048"/>
<path d="M0 40 Q25 30 40 30" stroke="#d05a6a" stroke-width="3" fill="none" opacity=".8"/>
<path d="M54 60 Q50 40 60 32 Q70 28 90 46" stroke="#c85060" stroke-width="2.5" fill="none" opacity=".8"/>
<rect x="42" y="28" width="10" height="8" fill="#d8d0d0"/>
<path d="M30 60 L46 36 L50 36 L42 60Z" fill="#8090a0" opacity=".5"/></g></svg></div>
<div class="a" style="left:1441px;top:329px;width:90px;height:69px;background:#fff;overflow:hidden;box-shadow:1px 1px 2px rgba(0,0,0,0.2);"><svg width="90" height="69" style="left:0;top:0"><defs><filter id="tb13" x="-5%" y="-5%" width="110%" height="110%"><feGaussianBlur stdDeviation="0.6"/></filter></defs><g filter="url(#tb13)"><rect width="90" height="69" fill="#ece8e2"/>
<rect x="0" y="0" width="90" height="18" fill="#dcd8d2"/>
<path d="M20 28 L90 8 V12 L20 32Z" fill="#fafafa"/>
<rect x="4" y="22" width="12" height="26" rx="5" fill="#b4a8d8"/><rect x="22" y="24" width="9" height="24" rx="4" fill="#b8acd8"/><rect x="36" y="26" width="6" height="22" rx="3" fill="#c0b4dc"/>
<rect x="56" y="24" width="34" height="26" fill="#e8d2a8"/><rect x="76" y="28" width="10" height="20" fill="#d8b070"/>
<rect x="10" y="44" width="6" height="4" fill="#4a3838"/><rect x="24" y="45" width="8" height="5" fill="#5a3a3a"/><rect x="40" y="45" width="8" height="5" fill="#5a3a3a"/><rect x="52" y="44" width="8" height="4" fill="#6a4a4a"/><rect x="62" y="44" width="6" height="4" fill="#6a4a48"/>
<rect x="0" y="52" width="90" height="17" fill="#ecebe6"/></g></svg></div>
<div class="a" style="left:1547px;top:345px;width:90px;height:53px;background:#fff;overflow:hidden;box-shadow:1px 1px 2px rgba(0,0,0,0.2);"><svg width="90" height="53" style="left:0;top:0"><defs><filter id="tb14" x="-5%" y="-5%" width="110%" height="110%"><feGaussianBlur stdDeviation="0.5"/></filter></defs><g filter="url(#tb14)"><rect width="90" height="53" fill="#c8c8c6"/>
<rect x="0" y="0" width="90" height="34" fill="#3264b0"/>
<rect x="0" y="18" width="90" height="16" fill="#7ea6d8"/>
<ellipse cx="68" cy="6" rx="18" ry="5" fill="#e8eef6"/><ellipse cx="30" cy="18" rx="10" ry="2.5" fill="#dae6f2"/><ellipse cx="70" cy="20" rx="14" ry="3" fill="#d8e2ee"/>
<rect x="0" y="30" width="90" height="6" fill="#b8c8d4"/>
<rect x="8" y="34" width="14" height="7" rx="2" fill="#f2f2f0"/><rect x="22" y="34" width="14" height="7" rx="2" fill="#e8e8e4"/><rect x="37" y="34" width="14" height="7" rx="2" fill="#f2f2f0"/><rect x="52" y="34" width="12" height="7" rx="2" fill="#f0f0ee"/><rect x="67" y="33" width="12" height="8" rx="2" fill="#f6f6f4"/>
<rect x="0" y="41" width="90" height="12" fill="#cbcbc8"/></g></svg></div>
<div class="a" style="left:911px;top:461px;width:90px;height:4px;background:#f6f6f6;overflow:hidden"><div class="a" style="left:25px;top:0;width:40px;height:30px;border-radius:50%;background:#5a6480"></div></div>
<div class="a" style="left:904px;top:271px;width:107px;text-align:center;font-size:12.5px;line-height:17px;letter-spacing:0.35px;color:#1a1a1a">0fd7-hhnunsq3<br>318875.jpg</div>
<div class="a" style="left:1010px;top:271px;width:107px;text-align:center;font-size:12.5px;line-height:17px;letter-spacing:0.35px;color:#1a1a1a">001.png</div>
<div class="a" style="left:1116px;top:271px;width:107px;text-align:center;font-size:12.5px;line-height:17px;letter-spacing:0.35px;color:#1a1a1a">4c853f4b8ffb16<br>72020dbec04b<br>456477.jpg</div>
<div class="a" style="left:1222px;top:271px;width:107px;text-align:center;font-size:12.5px;line-height:17px;letter-spacing:0.35px;color:#1a1a1a">4e2b004ce787f<br>b204c571187fe<br>5b902d.jpg</div>
<div class="a" style="left:1328px;top:271px;width:107px;text-align:center;font-size:12.5px;line-height:17px;letter-spacing:0.35px;color:#1a1a1a">6adbd4458809<br>1b287fb08d1ff4<br>120373.jpg</div>
<div class="a" style="left:1434px;top:271px;width:107px;text-align:center;font-size:12.5px;line-height:17px;letter-spacing:0.35px;color:#1a1a1a">9afad761ad1f5<br>9775bdc0d517<br>79f22ed.jpg</div>
<div class="a" style="left:1540px;top:271px;width:107px;text-align:center;font-size:12.5px;line-height:17px;letter-spacing:0.35px;color:#1a1a1a">9f553ad8fccfb1<br>9669e266d8730<br>0a7f2.jpg</div>
<div class="a" style="left:904px;top:403px;width:107px;text-align:center;font-size:12.5px;line-height:17px;letter-spacing:0.35px;color:#1a1a1a">37df3482482fc6<br>720e698000367<br>e3232.jpg</div>
<div class="a" style="left:1010px;top:403px;width:107px;text-align:center;font-size:12.5px;line-height:17px;letter-spacing:0.35px;color:#1a1a1a">49c9d0557ccf7<br>973b97276bd4<br>6576399.jpg</div>
<div class="a" style="left:1116px;top:403px;width:107px;text-align:center;font-size:12.5px;line-height:17px;letter-spacing:0.35px;color:#1a1a1a">521.jpg</div>
<div class="a" style="left:1222px;top:403px;width:107px;text-align:center;font-size:12.5px;line-height:17px;letter-spacing:0.35px;color:#1a1a1a">927904b9de74<br>6dde58c3860af<br>ac800a8.png</div>
<div class="a" style="left:1328px;top:403px;width:107px;text-align:center;font-size:12.5px;line-height:17px;letter-spacing:0.35px;color:#1a1a1a">2018071313525<br>46187.jpg</div>
<div class="a" style="left:1434px;top:403px;width:107px;text-align:center;font-size:12.5px;line-height:17px;letter-spacing:0.35px;color:#1a1a1a">b77d7739796c8<br>e5e6d61a17bd<br>ab530bf.jpg</div>
<div class="a" style="left:1540px;top:403px;width:107px;text-align:center;font-size:12.5px;line-height:17px;letter-spacing:0.35px;color:#1a1a1a">d92f238c439c4<br>53a9edb2f05a4<br>4db232.jpg</div>
<div class="a" style="left:731px;top:465px;width:933px;height:80px;background:#f0f0f0"></div>
<div class="t" style="left:861px;top:482px;font-size:12px;line-height:1;color:#1a1a1a;">文件名(N):</div>
<div class="a" style="left:923px;top:476px;width:524px;height:26px;border:1px solid #0078d7;background:#fff"></div>
<svg style="left:1433px;top:486px" width="10" height="6"><path d="M0.5 0.5 L5 5 L9.5 0.5" stroke="#444" stroke-width="1.1" fill="none"/></svg>
<div class="a" style="left:1459px;top:476px;width:188px;height:25px;border:1px solid #c9c9c9;background:#e5e5e5"></div>
<div class="t" style="left:1463px;top:483px;font-size:12px;line-height:1;color:#1a1a1a;">所有文件 (*.*)</div>
<svg style="left:1633px;top:486px" width="10" height="6"><path d="M0.5 0.5 L5 5 L9.5 0.5" stroke="#444" stroke-width="1.1" fill="none"/></svg>
<div class="a" style="left:1460px;top:508px;width:86px;height:24px;border:2px solid #0078d7;background:#e1e1e1"></div>
<div class="t" style="left:1482px;top:514px;font-size:12px;line-height:1;color:#111;">打开(O)</div>
<div class="a" style="left:1560px;top:508px;width:86px;height:24px;border:1px solid #adadad;background:#e1e1e1"></div>
<div class="t" style="left:1591px;top:514px;font-size:12px;line-height:1;color:#111;">取消</div>
<svg style="left:1653px;top:535px" width="9" height="9"><g fill="#c0c0c0"><rect x="6" y="0" width="2" height="2"/><rect x="3" y="3" width="2" height="2"/><rect x="6" y="3" width="2" height="2"/><rect x="0" y="6" width="2" height="2"/><rect x="3" y="6" width="2" height="2"/><rect x="6" y="6" width="2" height="2"/></g></svg>

<!-- sogou bar -->
<div class="a" style="left:1679px;top:885px;width:178px;height:26px;background:#fff;border:1px solid #d5d5d5;border-radius:2px"></div>
<svg style="left:1655px;top:880px" width="33" height="32"><g transform="rotate(-14 16 17)"><rect x="3" y="3" width="27" height="27" rx="6" fill="#ea5a2c"/><path d="M23 9.5 Q19 7.5 14 8.5 Q9 9.8 10 13.5 Q11 16 16.5 16.8 Q22.5 17.6 22 21.5 Q21 25.5 15 25.2 Q11 25 8.5 23.5" stroke="#fff" stroke-width="4" fill="none" stroke-linecap="round"/></g></svg>
<div class="t" style="left:1692px;top:890px;font-size:15px;line-height:1;color:#1c6fd1;font-weight:bold;-webkit-text-stroke:0.6px #1c6fd1">中</div>
<svg style="left:1718px;top:892px" width="13" height="13"><circle cx="3" cy="3" r="1.8" fill="none" stroke="#1c6fd1" stroke-width="1.3"/><circle cx="10" cy="7" r="2" fill="#1c6fd1"/><path d="M11.8 7 Q12 10.5 9 12" stroke="#1c6fd1" stroke-width="1.6" fill="none" stroke-linecap="round"/></svg>
<svg style="left:1742px;top:889px" width="12" height="17"><rect x="3" y="0" width="6" height="10" rx="3" fill="#1c6fd1"/><path d="M1 7 Q1 12.5 6 12.5 Q11 12.5 11 7" stroke="#1c6fd1" stroke-width="1.4" fill="none"/><rect x="5.3" y="12" width="1.4" height="3" fill="#1c6fd1"/><rect x="3" y="15" width="6" height="1.4" fill="#1c6fd1"/></svg>
<svg style="left:1765px;top:892px" width="15" height="12"><rect x="0" y="0" width="15" height="12" rx="2" fill="#1c6fd1"/><g fill="#fff"><rect x="2.5" y="2.5" width="1.6" height="1.6"/><rect x="5.5" y="2.5" width="1.6" height="1.6"/><rect x="8.5" y="2.5" width="1.6" height="1.6"/><rect x="11" y="2.5" width="1.6" height="1.6"/><rect x="2.5" y="5.5" width="1.6" height="1.6"/><rect x="5.5" y="5.5" width="1.6" height="1.6"/><rect x="8.5" y="5.5" width="1.6" height="1.6"/><rect x="11" y="5.5" width="1.6" height="1.6"/><rect x="4" y="8.5" width="7" height="1.5"/></g></svg>
<svg style="left:1789px;top:887px" width="19" height="19"><path d="M1 6 L6 3 Q9 5 12 3 L16 6 L14 9 L13 8 V17 H5 V8 L3 9Z" fill="#b46ae0"/><path d="M5 12 H13 V17 H5Z" fill="#7aa8f0"/><circle cx="15" cy="3" r="3" fill="#e8463a"/></svg>
<svg style="left:1814px;top:891px" width="14" height="14"><g fill="#1c6fd1"><rect x="0" y="0" width="6" height="6" rx="1.5"/><rect x="8" y="0" width="6" height="6" rx="3"/><rect x="0" y="8" width="6" height="6" rx="1.5"/><rect x="8" y="8" width="6" height="6" rx="1.5"/></g></svg>
<svg style="left:1835px;top:887px" width="21" height="20"><circle cx="9.5" cy="11" r="8.5" fill="#f3f3f3"/><path d="M2 9 Q9 4 16 7 L15 11 Q9 9 3 12Z" fill="#e06a2a"/><rect x="5" y="8" width="4" height="3" fill="#333"/><rect x="10" y="7.5" width="4" height="3" fill="#333"/><path d="M17 2 L18 4 L20 4.5 L18 5.2 L17 7 L16.3 5.2 L14.5 4.5 L16.3 4Z" fill="#ffd83a"/></svg>
<!-- thermometer-like widget -->
<svg style="left:1906px;top:856px" width="14" height="56"><rect x="4" y="1" width="6" height="46" rx="3" fill="#5e6870"/><rect x="6" y="24" width="2" height="24" fill="#7cc4e8"/><circle cx="7" cy="50" r="5.5" fill="#5e6870"/><circle cx="7" cy="50" r="4" fill="#56b0e0"/></svg>
<svg style="left:1413px;top:257px" width="13" height="20"><path d="M0.5 0.5 V15.5 L4 12 L6.8 18.5 L9 17.5 L6.3 11.3 H11.5Z" fill="#fff" stroke="#111" stroke-width="1" stroke-linejoin="round"/></svg>

</body></html>
